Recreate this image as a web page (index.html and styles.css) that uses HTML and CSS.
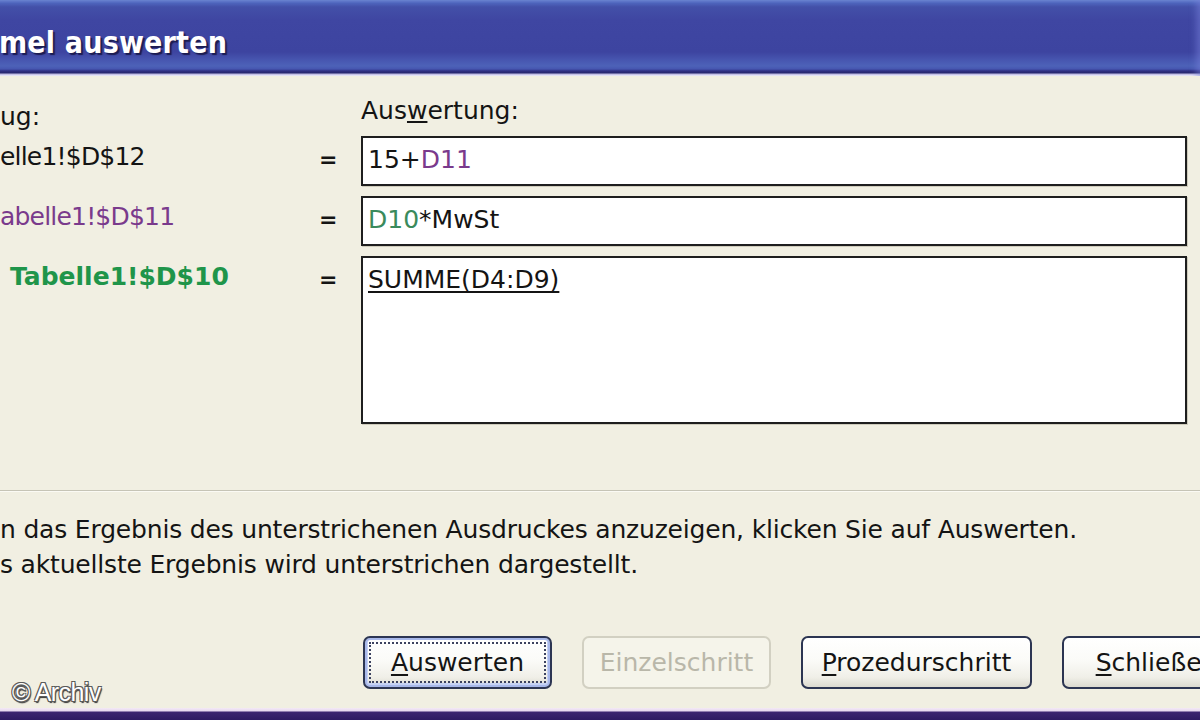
FILE: index.html
```html
<!DOCTYPE html>
<html lang="de">
<head>
<meta charset="utf-8">
<title>Formel auswerten</title>
<link rel="stylesheet" href="styles.css">
</head>
<body>
<div class="window">
  <div class="titlebar">
    <span class="title">mel auswerten</span>
  </div>
  <div class="content">
    <div class="grid">
      <div class="label head">ug:</div>
      <div class="eq head"></div>
      <div class="head">Aus<u>w</u>ertung:</div>

      <div class="label tight">elle1!$D$12</div>
      <div class="eq">=</div>
      <div class="box box-short"><span>15+</span><span class="purple">D11</span></div>

      <div class="label purple tight">abelle1!$D$11</div>
      <div class="eq">=</div>
      <div class="box box-short"><span class="green-lt">D10</span><span>*MwSt</span></div>

      <div class="label green indent">Tabelle1!$D$10</div>
      <div class="eq">=</div>
      <div class="box box-tall"><u>SUMME(D4:D9)</u></div>
    </div>

    <div class="separator"></div>

    <div class="hint">
      <p>n das Ergebnis des unterstrichenen Ausdruckes anzuzeigen, klicken Sie auf Auswerten.</p>
      <p>s aktuellste Ergebnis wird unterstrichen dargestellt.</p>
    </div>

    <div class="buttons">
      <div class="btn default"><span class="focus"><u>A</u>uswerten</span></div>
      <div class="btn disabled"><span>Einzelschritt</span></div>
      <div class="btn wide"><span><u>P</u>rozedurschritt</span></div>
      <div class="btn"><span><u>S</u>chließen</span></div>
    </div>

    <div class="watermark">© Archiv</div>
  </div>
  <div class="bottombar"></div>
</div>
</body>
</html>
```

FILE: styles.css
```css
* { box-sizing: border-box; }

html, body {
  margin: 0;
  padding: 0;
  width: 1200px;
  height: 720px;
  overflow: hidden;
  background: #f1efe2;
}

.window {
  width: 1200px;
  height: 720px;
  display: flex;
  flex-direction: column;
  overflow: hidden;
  font-family: "DejaVu Sans", sans-serif;
  font-size: 25px;
  color: #141414;
}

/* ---------- title bar ---------- */
.titlebar {
  flex: 0 0 76px;
  display: flex;
  align-items: flex-start;
  padding-top: 26px;
  background: linear-gradient(to bottom,
    #6a84d0 0px, #4f66be 3px, #4350a8 7px, #3f46a2 20px,
    #3d44a0 52px, #4756b0 60px, #4d62b8 66px, #4656b0 69px,
    #2f2f82 71px, #28286e 73px, #b8b4e0 74px, #f8f6ff 76px);
  box-shadow: inset -8px 0 6px -4px rgba(120, 130, 220, 0.5);
}

.title {
  margin-left: -1px;
  color: #ffffff;
  font-family: "DejaVu Sans Condensed", "DejaVu Sans", sans-serif;
  font-stretch: condensed;
  font-weight: bold;
  font-size: 30px;
  line-height: 34px;
  letter-spacing: 0.2px;
  text-shadow: 2px 2px 1px #1c1c52;
}

/* ---------- content ---------- */
.content {
  flex: 1 1 auto;
  position: relative;
  padding-top: 20px;
  background: #f1efe2;
}

.grid {
  display: grid;
  grid-template-columns: 318px 43px 826px;
  grid-template-rows: 30px 50px 50px 168px;
  row-gap: 10px;
}

.head {
  line-height: 30px;
  white-space: nowrap;
}

.label {
  line-height: 30px;
  padding-top: 6px;
  white-space: nowrap;
}

.label.tight { letter-spacing: -0.8px; }
.label.indent { padding-left: 10px; }

.eq {
  line-height: 30px;
  padding-top: 9px;
  padding-left: 1px;
  font-weight: bold;
  font-size: 22px;
}

.box {
  background: #ffffff;
  border: 2px solid #1e1e1e;
  line-height: 30px;
  padding: 7px 5px 0 5px;
  white-space: nowrap;
  box-shadow: 1px 1px 0 #cfccbc;
}

.box u { text-underline-offset: 3px; text-decoration-thickness: 2px; }

.purple { color: #7a3a8c; }
.green { color: #1f954a; font-weight: bold; }
.green-lt { color: #3a8a5c; }

/* ---------- separator & hint ---------- */
.separator {
  margin-top: 66px;
  height: 2px;
  border-top: 1px solid #c6c4b6;
  border-bottom: 1px solid #fbfaf4;
}

.hint {
  margin-top: 20px;
}

.hint p {
  margin: 0;
  line-height: 35px;
  white-space: nowrap;
  letter-spacing: -0.18px;
}

/* ---------- buttons ---------- */
.buttons {
  display: flex;
  gap: 30px;
  margin-top: 54px;
  margin-left: 363px;
}

.btn {
  flex: 0 0 189px;
  height: 53px;
  border: 2px solid #2c3552;
  border-radius: 7px;
  background: linear-gradient(to bottom, #ffffff 0%, #fbfbf8 45%, #f0efe8 80%, #dcdacf 100%);
  display: flex;
  align-items: center;
  justify-content: center;
  white-space: nowrap;
}

.btn.wide { flex-basis: 231px; }

.btn u { text-underline-offset: 3px; text-decoration-thickness: 2px; }

.btn.default {
  box-shadow: inset 0 0 0 2px #a8b8ea, inset 0 -1px 0 3px #c6d2f4;
  padding: 4px;
}

.btn.default .focus {
  flex: 1 1 auto;
  align-self: stretch;
  display: flex;
  align-items: center;
  justify-content: center;
  border: 2px dotted #3c4260;
  border-radius: 1px;
}

.btn.disabled {
  border-color: #d2d0c2;
  background: #f5f4ea;
  color: #b9b7a9;
}

/* ---------- watermark ---------- */
.watermark {
  position: absolute;
  left: 12px;
  bottom: 1px;
  font-family: "Liberation Sans", Arial, sans-serif;
  font-size: 25px;
  letter-spacing: -0.6px;
  color: #ffffff;
  text-shadow: -1px -1px 0 #5a5a5a, 1px -1px 0 #5a5a5a, -1px 1px 0 #5a5a5a, 1px 1px 0 #5a5a5a, 1px 2px 1px #333;
}

/* ---------- bottom bar ---------- */
.bottombar {
  flex: 0 0 12px;
  background: linear-gradient(to bottom, #f4eaf6 0px, #e6d6ee 3px, #3c2470 4px, #2e1a62 12px);
}
```
